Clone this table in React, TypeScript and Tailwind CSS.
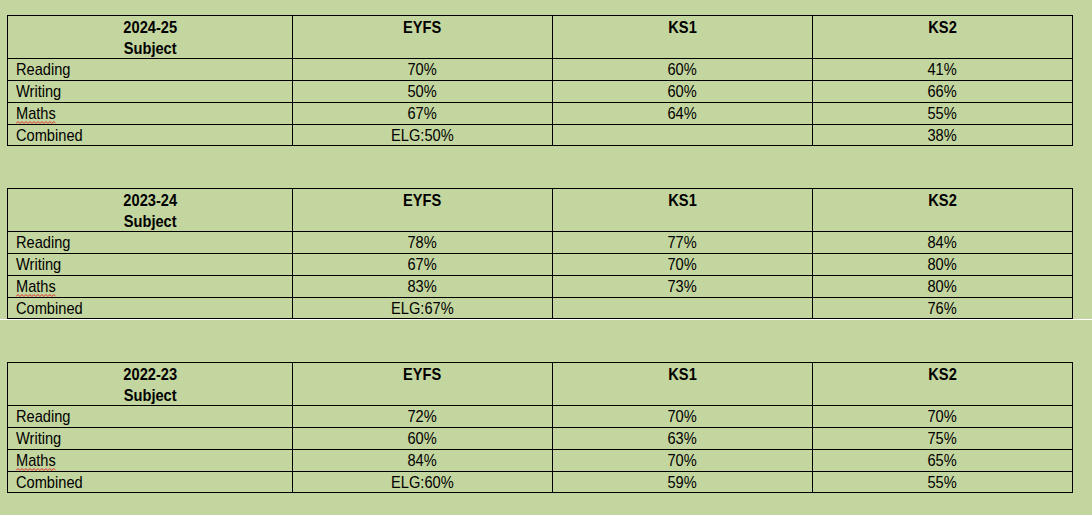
import React from 'react';

type Row = { subject: string; eyfs: string; ks1: string; ks2: string };

const tables: { year: string; rows: Row[] }[] = [
  {
    year: '2024-25',
    rows: [
      { subject: 'Reading', eyfs: '70%', ks1: '60%', ks2: '41%' },
      { subject: 'Writing', eyfs: '50%', ks1: '60%', ks2: '66%' },
      { subject: 'Maths', eyfs: '67%', ks1: '64%', ks2: '55%' },
      { subject: 'Combined', eyfs: 'ELG:50%', ks1: '', ks2: '38%' },
    ],
  },
  {
    year: '2023-24',
    rows: [
      { subject: 'Reading', eyfs: '78%', ks1: '77%', ks2: '84%' },
      { subject: 'Writing', eyfs: '67%', ks1: '70%', ks2: '80%' },
      { subject: 'Maths', eyfs: '83%', ks1: '73%', ks2: '80%' },
      { subject: 'Combined', eyfs: 'ELG:67%', ks1: '', ks2: '76%' },
    ],
  },
  {
    year: '2022-23',
    rows: [
      { subject: 'Reading', eyfs: '72%', ks1: '70%', ks2: '70%' },
      { subject: 'Writing', eyfs: '60%', ks1: '63%', ks2: '75%' },
      { subject: 'Maths', eyfs: '84%', ks1: '70%', ks2: '65%' },
      { subject: 'Combined', eyfs: 'ELG:60%', ks1: '59%', ks2: '55%' },
    ],
  },
];

// zigzag points for the spell-check squiggle
const squiggle = Array.from({ length: 21 }, (_, i) => `${i * 2},${i % 2 ? 0.5 : 2.5}`).join(' ');

function SpellError({ children }: { children: React.ReactNode }) {
  return (
    <span className="relative">
      {children}
      <svg
        className="absolute left-0 top-[17px] h-[3px] w-full"
        viewBox="0 0 40 3"
        preserveAspectRatio="none"
        fill="none"
      >
        <polyline points={squiggle} stroke="#e02b2b" strokeWidth="1" />
      </svg>
    </span>
  );
}

// Arial Narrow isn't available, so squeeze Liberation Sans horizontally
function Narrow({ children, left }: { children: React.ReactNode; left?: boolean }) {
  return (
    <span className={`inline-block scale-x-[0.86] ${left ? 'origin-left' : 'origin-center'}`}>
      {children}
    </span>
  );
}

function HeadCell({ children }: { children: React.ReactNode }) {
  return (
    <th className="border border-black p-0 align-top font-bold">
      <div className="h-[42px] pt-px text-center leading-[21px]">
        <Narrow>{children}</Narrow>
      </div>
    </th>
  );
}

function Cell({ children, left }: { children: React.ReactNode; left?: boolean }) {
  return (
    <td className="border border-black p-0 align-top">
      <div className={`h-[20px] pt-px leading-[20px] ${left ? 'pl-[8px] text-left' : 'text-center'}`}>
        <Narrow left={left}>{children}</Narrow>
      </div>
    </td>
  );
}

function ResultsTable({ year, rows }: { year: string; rows: Row[] }) {
  return (
    <table className="ml-[7px] w-[1066px] table-fixed border-collapse border border-black text-[17px] text-black">
      <colgroup>
        <col className="w-[285px]" />
        <col className="w-[260px]" />
        <col className="w-[260px]" />
        <col className="w-[260px]" />
      </colgroup>
      <thead>
        <tr className="h-[43px]">
          <HeadCell>
            {year}
            <br />
            Subject
          </HeadCell>
          <HeadCell>EYFS</HeadCell>
          <HeadCell>KS1</HeadCell>
          <HeadCell>KS2</HeadCell>
        </tr>
      </thead>
      <tbody>
        {rows.map((r, i) => (
          <tr key={r.subject} className={i === rows.length - 1 ? 'h-[21px]' : 'h-[22px]'}>
            <Cell left>{r.subject === 'Maths' ? <SpellError>{r.subject}</SpellError> : r.subject}</Cell>
            <Cell>{r.eyfs}</Cell>
            <Cell>{r.ks1}</Cell>
            <Cell>{r.ks2}</Cell>
          </tr>
        ))}
      </tbody>
    </table>
  );
}

export default function App() {
  return (
    <div className="h-[515px] w-[1092px] overflow-hidden bg-[#c4d69f] pt-[15px] font-['Liberation_Sans',Arial,sans-serif]">
      <ResultsTable {...tables[0]} />
      <div className="h-[42px]" />
      <ResultsTable {...tables[1]} />
      <div className="h-px w-full bg-white" />
      <div className="h-[42px]" />
      <ResultsTable {...tables[2]} />
    </div>
  );
}
